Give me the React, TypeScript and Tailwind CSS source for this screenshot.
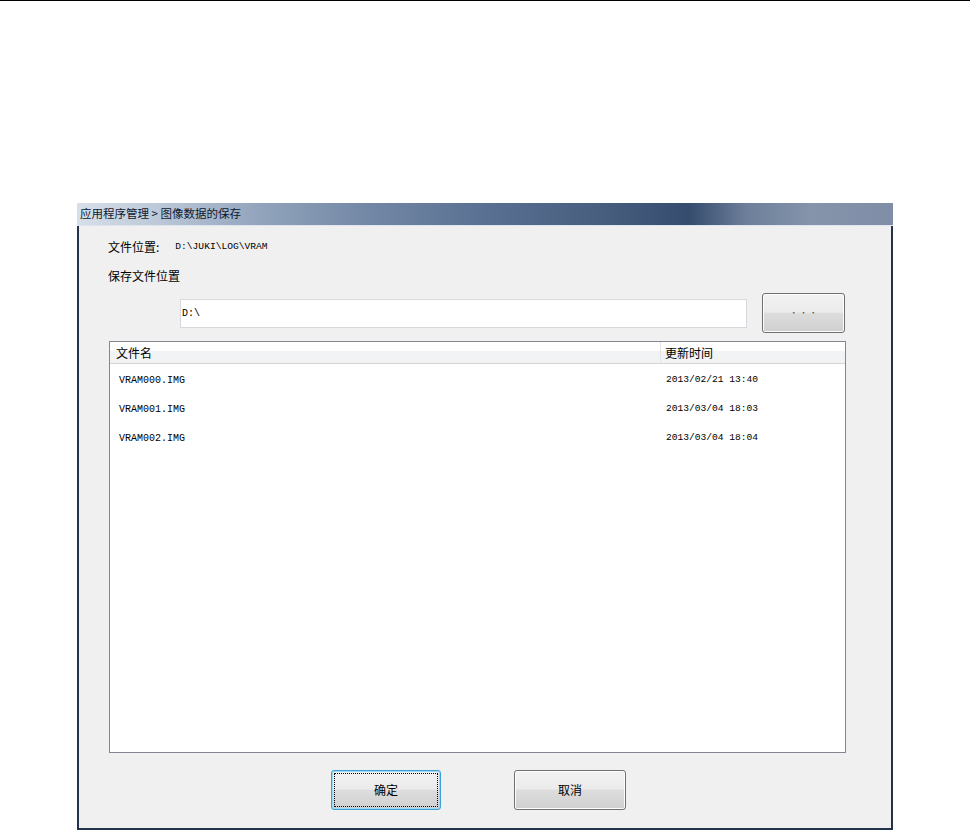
import React from "react";

const cjk = { fontFamily: '"Noto Sans CJK SC", "Noto Sans", sans-serif' };
const mono = { fontFamily: '"Liberation Mono", "DejaVu Sans Mono", monospace' };

function WinButton({ label, focused, className }: { label: string; focused?: boolean; className?: string }) {
  return (
    <div
      className={
        "relative flex items-center justify-center rounded-[3px] border bg-[linear-gradient(to_bottom,#f2f2f2_0%,#ebebeb_48%,#dddddd_50%,#cfcfcf_100%)] text-[12px] text-black " +
        (focused ? "border-[#3c9fd7] shadow-[inset_0_0_0_1px_#9fd8f3] " : "border-[#707070] shadow-[inset_0_0_0_1px_#fcfcfc] ") +
        (className ?? "")
      }
      style={cjk}
    >
      {focused && <div className="absolute inset-[2px] border border-dotted border-black" />}
      <span className="relative">{label}</span>
    </div>
  );
}

const rows = [
  { name: "VRAM000.IMG", time: "2013/02/21 13:40" },
  { name: "VRAM001.IMG", time: "2013/03/04 18:03" },
  { name: "VRAM002.IMG", time: "2013/03/04 18:04" },
];

export default function App() {
  return (
    <div className="w-[970px] h-[830px] bg-white overflow-hidden">
      <div className="h-px w-full bg-black" />
      <div className="pl-[77px] pt-[202px]">
        <div className="w-[816px] h-[627px] flex flex-col">
          {/* title bar */}
          <div
            className="h-[23px] flex items-center pl-[3px] text-[11.5px] text-[#0b1a33] bg-[linear-gradient(to_right,#d7dfe9_0%,#bcc8d8_10%,#93a5bd_22%,#7489a6_35%,#5a7092_50%,#475d7e_65%,#354c6e_75%,#6d7f9a_82%,#8594ab_90%,#7f8ea6_100%)] border-b border-[#dfe5ee]"
            style={cjk}
          >
            应用程序管理 &gt; 图像数据的保存
          </div>
          {/* body */}
          <div className="flex-1 bg-[#f0f0f0] border-x-2 border-b-2 border-[#24334d] flex flex-col">
            <div className="mt-[13px] ml-[29px] h-[16px] flex items-center text-[12px] text-black">
              <span style={cjk}>文件位置:</span>
              <span className="ml-[16px] text-[9.6px]" style={mono}>D:\JUKI\LOG\VRAM</span>
            </div>
            <div className="mt-[13px] ml-[29px] h-[16px] flex items-center text-[12px] text-black" style={cjk}>
              保存文件位置
            </div>
            <div className="mt-[9px] h-[40px] flex items-center">
              <div className="ml-[101px] w-[567px] h-[29px] bg-white border border-[#d5d9de] flex items-center pl-[1px] text-[10px] text-black" style={mono}>
                D:\
              </div>
              <WinButton label="· · ·" className="ml-[15px] w-[83px] h-[40px] !text-[8px] !text-[#555]" />
            </div>
            <div className="mt-[8px] ml-[30px] w-[737px] h-[412px] bg-white border border-[#828790] flex flex-col">
              <div className="h-[22px] flex bg-[linear-gradient(to_bottom,#ffffff_0%,#ffffff_40%,#f2f3f5_45%,#f2f3f5_100%)] border-b border-[#d5d5d5] text-[12px] text-black" style={cjk}>
                <div className="w-[551px] pl-[6px] flex items-center border-r border-[#e3e5e8]">文件名</div>
                <div className="flex-1 pl-[4px] flex items-center">更新时间</div>
              </div>
              <div className="pt-[2px] flex flex-col">
                {rows.map((r) => (
                  <div key={r.name} className="h-[29px] flex items-center text-[10px] text-black" style={mono}>
                    <div className="w-[551px] pl-[9px]">{r.name}</div>
                    <div className="flex-1 pl-[5px] text-[9.6px]">{r.time}</div>
                  </div>
                ))}
              </div>
            </div>
            <div className="mt-[17px] flex">
              <WinButton label="确定" focused className="ml-[252px] w-[110px] h-[40px]" />
              <WinButton label="取消" className="ml-[73px] w-[112px] h-[40px]" />
            </div>
          </div>
        </div>
      </div>
    </div>
  );
}
